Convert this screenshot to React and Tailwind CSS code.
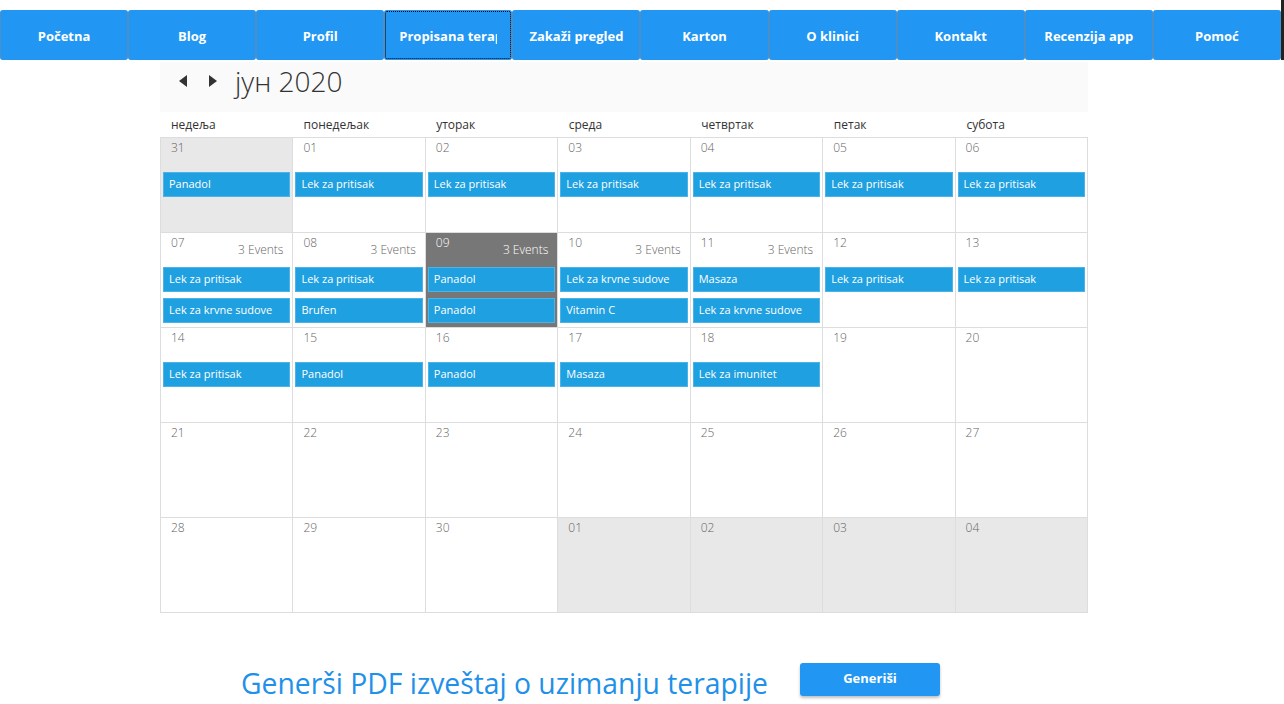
import React from "react";

const navItems = [
  "Početna",
  "Blog",
  "Profil",
  "Propisana terapija",
  "Zakaži pregled",
  "Karton",
  "O klinici",
  "Kontakt",
  "Recenzija app",
  "Pomoć",
];

const dayNames = ["недеља", "понедељак", "уторак", "среда", "четвртак", "петак", "субота"];

// each cell: date, events, other month flag, count label, selected
const weeks = [
  [
    { d: "31", ev: ["Panadol"], other: true },
    { d: "01", ev: ["Lek za pritisak"] },
    { d: "02", ev: ["Lek za pritisak"] },
    { d: "03", ev: ["Lek za pritisak"] },
    { d: "04", ev: ["Lek za pritisak"] },
    { d: "05", ev: ["Lek za pritisak"] },
    { d: "06", ev: ["Lek za pritisak"] },
  ],
  [
    { d: "07", ev: ["Lek za pritisak", "Lek za krvne sudove"], more: true },
    { d: "08", ev: ["Lek za pritisak", "Brufen"], more: true },
    { d: "09", ev: ["Panadol", "Panadol"], more: true, selected: true },
    { d: "10", ev: ["Lek za krvne sudove", "Vitamin C"], more: true },
    { d: "11", ev: ["Masaza", "Lek za krvne sudove"], more: true },
    { d: "12", ev: ["Lek za pritisak"] },
    { d: "13", ev: ["Lek za pritisak"] },
  ],
  [
    { d: "14", ev: ["Lek za pritisak"] },
    { d: "15", ev: ["Panadol"] },
    { d: "16", ev: ["Panadol"] },
    { d: "17", ev: ["Masaza"] },
    { d: "18", ev: ["Lek za imunitet"] },
    { d: "19", ev: [] },
    { d: "20", ev: [] },
  ],
  [
    { d: "21", ev: [] },
    { d: "22", ev: [] },
    { d: "23", ev: [] },
    { d: "24", ev: [] },
    { d: "25", ev: [] },
    { d: "26", ev: [] },
    { d: "27", ev: [] },
  ],
  [
    { d: "28", ev: [] },
    { d: "29", ev: [] },
    { d: "30", ev: [] },
    { d: "01", ev: [], other: true },
    { d: "02", ev: [], other: true },
    { d: "03", ev: [], other: true },
    { d: "04", ev: [], other: true },
  ],
];

function Cell({ cell }) {
  const bg = cell.selected ? "bg-[#777777]" : cell.other ? "bg-[#e8e8e8]" : "bg-white";
  const txt = cell.selected ? "text-white" : "text-[#666666]";
  return (
    <div className={`h-[95px] border-l border-t border-[#dddddd] ${bg}`}>
      <div className={`flex justify-between items-start h-[22px] pl-[10px] pr-[9px] pt-[1px] text-[12px] font-light ${txt}`}>
        <span>{cell.d}</span>
        {cell.more && <span className="mt-[7px]">3 Events</span>}
      </div>
      <div className="flex flex-col gap-[6px] mt-[12px] px-[2px]">
        {cell.ev.map((e, i) => (
          <div
            key={i}
            className="h-[25px] bg-[#1fa0e1] border border-[#4ab3e8] text-white text-[11px] leading-[22px] pl-[5px] whitespace-nowrap overflow-hidden"
          >
            {e}
          </div>
        ))}
      </div>
    </div>
  );
}

export default function App() {
  return (
    <div
      className="w-[1284px] h-[704px] overflow-hidden bg-white relative"
      style={{ fontFamily: "'Open Sans', 'Noto Sans', sans-serif" }}
    >
      <div className="h-[10px]" />
      <nav className="flex w-[1281px] h-[50px]">
        {navItems.map((item, i) => (
          <div
            key={item}
            className={`flex-1 min-w-0 flex items-center bg-[#2196f3] rounded-[3px] border-x border-[#4a8fc7] px-[14px] pt-[3px] text-white text-[13px] font-bold ${
              i === 3 ? "outline outline-1 outline-dotted outline-black -outline-offset-2" : ""
            }`}
          >
            <div className="w-full overflow-hidden whitespace-nowrap text-center">{item}</div>
          </div>
        ))}
      </nav>

      <div className="ml-[160px] w-[928px] mt-[2px]">
        <div className="h-[50px] bg-[#fafafa] flex items-center pb-[12px] pl-[17px] text-[#333333]">
          <svg width="12" height="14" viewBox="0 0 12 14" className="mr-[18px]">
            <path d="M10 1 L2 7 L10 13 Z" fill="#333" />
          </svg>
          <svg width="12" height="14" viewBox="0 0 12 14" className="mr-[16px]">
            <path d="M2 1 L10 7 L2 13 Z" fill="#333" />
          </svg>
          <span className="text-[28px] font-light leading-none">јун 2020</span>
        </div>
        <div className="grid grid-cols-7 h-[25px] items-center">
          {dayNames.map((n) => (
            <div key={n} className="pl-[11px] text-[12px] text-[#333333] pt-[1px]">
              {n}
            </div>
          ))}
        </div>
        <div className="grid grid-cols-7 border-r border-b border-[#dddddd]">
          {weeks.flat().map((c, i) => (
            <Cell key={i} cell={c} />
          ))}
        </div>
      </div>

      <div className="flex items-center mt-[48px] ml-[241px]">
        <span className="text-[28.3px] text-[#2190e8] leading-none pt-[8px]">
          Generši PDF izveštaj o uzimanju terapije
        </span>
        <button className="ml-[32px] w-[140px] h-[33px] bg-[#2196f3] rounded-[3px] text-white text-[13px] font-bold shadow-[0_2px_3px_rgba(0,0,0,0.25)]">
          Generiši
        </button>
      </div>

      <div className="absolute right-0 top-0 w-[3px] h-[60px] bg-[#222222]" />
    </div>
  );
}
